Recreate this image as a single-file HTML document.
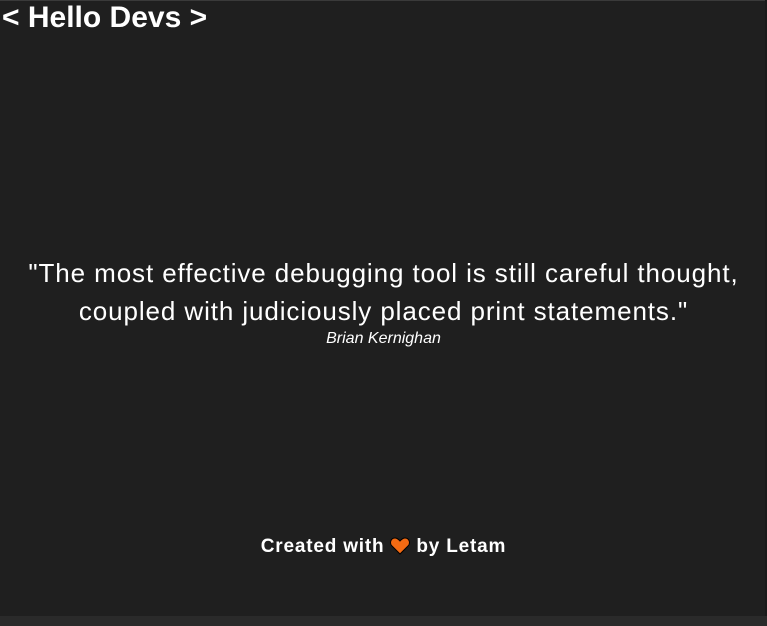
<!DOCTYPE html>
<html><head><style>
html,body{margin:0;padding:0;width:767px;height:626px;overflow:hidden;background:#1f1f1f;font-family:"Liberation Sans",sans-serif;color:#fff}
.top{position:absolute;left:0;top:0;width:767px;height:1px;background:#3a3a3a}
.bot{position:absolute;left:0;top:616px;width:767px;height:10px;background:#2a2a2a}
.rt{position:absolute;left:765px;top:0;width:2px;height:616px;background:#1a1a1a}
h1{position:absolute;left:2px;top:2px;margin:0;font-size:30px;font-weight:bold;line-height:32px}
.q{position:absolute;left:0;width:767px;top:254px;text-align:center;font-size:26px;letter-spacing:0.9px;line-height:38px}
.a{position:absolute;left:0;width:767px;top:330px;text-align:center;font-size:16px;font-style:italic}
.f{position:absolute;left:0;width:767px;top:536px;text-align:center;font-size:19px;font-weight:bold;letter-spacing:0.8px}
.f svg{vertical-align:-3px;margin:0 6px}
</style></head><body>
<div class="top"></div><div class="rt"></div><div class="bot"></div>
<h1>&lt; Hello Devs &gt;</h1>
<div class="q">"The most effective debugging tool is still careful thought,<br>coupled with judiciously placed print statements."</div>
<div class="a">Brian Kernighan</div>
<div class="f">Created with<svg width="20" height="18" viewBox="0 0 20 18"><path d="M10 17 L2 9 C-1 6 1 1 5 1 C7.5 1 9 3 10 4 C11 3 12.5 1 15 1 C19 1 21 6 18 9 Z" fill="#f26a13" stroke="#000" stroke-width="1"/></svg>by Letam</div>
</body></html>
